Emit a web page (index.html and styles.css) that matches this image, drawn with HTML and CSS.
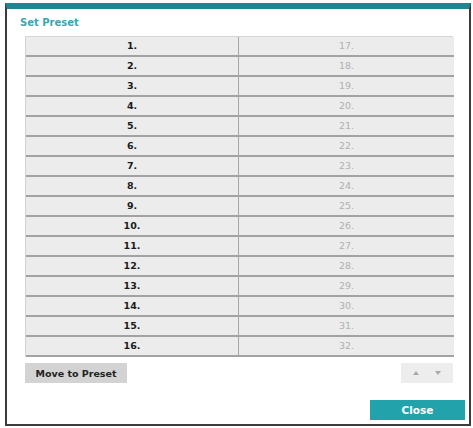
FILE: index.html
```html
<!DOCTYPE html>
<html>
<head>
<meta charset="utf-8">
<link rel="stylesheet" href="styles.css">
</head>
<body>
<div class="dialog">
  <div class="title">Set Preset</div>
  <div class="preset-table">
    <div class="cell num">1.</div><div class="cell dim">17.</div>
    <div class="cell num">2.</div><div class="cell dim">18.</div>
    <div class="cell num">3.</div><div class="cell dim">19.</div>
    <div class="cell num">4.</div><div class="cell dim">20.</div>
    <div class="cell num">5.</div><div class="cell dim">21.</div>
    <div class="cell num">6.</div><div class="cell dim">22.</div>
    <div class="cell num">7.</div><div class="cell dim">23.</div>
    <div class="cell num">8.</div><div class="cell dim">24.</div>
    <div class="cell num">9.</div><div class="cell dim">25.</div>
    <div class="cell num">10.</div><div class="cell dim">26.</div>
    <div class="cell num">11.</div><div class="cell dim">27.</div>
    <div class="cell num">12.</div><div class="cell dim">28.</div>
    <div class="cell num">13.</div><div class="cell dim">29.</div>
    <div class="cell num">14.</div><div class="cell dim">30.</div>
    <div class="cell num">15.</div><div class="cell dim">31.</div>
    <div class="cell num">16.</div><div class="cell dim">32.</div>
  </div>
  <div class="toolbar">
    <button class="btn-move">Move to Preset</button>
    <div class="pager">
      <svg class="arrow" width="6" height="4" viewBox="0 0 6 4"><path d="M0 4 L3 0 L6 4 Z" fill="#a8a8a8"/></svg>
      <svg class="arrow" width="6" height="4" viewBox="0 0 6 4"><path d="M0 0 L6 0 L3 4 Z" fill="#a8a8a8"/></svg>
    </div>
  </div>
  <button class="btn-close">Close</button>
</div>
</body>
</html>
```

FILE: styles.css
```css
html, body {
  margin: 0;
  padding: 0;
  background: #ffffff;
}

body {
  font-family: "DejaVu Sans", Verdana, sans-serif;
}

.dialog {
  box-sizing: border-box;
  width: 466px;
  height: 423px;
  margin: 3px 0 0 5px;
  border: 2px solid #3c3c3c;
  border-top: 6px solid #1f8691;
  background: #ffffff;
  display: flex;
  flex-direction: column;
}

.title {
  margin: 7px 0 0 13px;
  height: 20px;
  font-size: 10px;
  line-height: 13px;
  font-weight: bold;
  color: #3aa6b0;
}

.preset-table {
  margin-left: 18px;
  width: 428px;
  display: grid;
  grid-template-columns: 213px 215px;
  border-top: 1px solid #d4d4d4;
  border-left: 1px solid #d4d4d4;
  border-right: 1px solid #d4d4d4;
  box-sizing: border-box;
}

.cell {
  height: 18px;
  line-height: 18px;
  border-bottom: 2px solid #a2a2a2;
  background: #ececec;
  text-align: center;
  font-size: 9.5px;
}

.num {
  font-weight: bold;
  color: #1a1a1a;
  border-right: 1px solid #a6a6a6;
}

.dim {
  color: #b0b0b0;
}

.toolbar {
  margin: 6px 0 0 18px;
  width: 428px;
  display: flex;
  justify-content: space-between;
}

.btn-move {
  width: 102px;
  height: 20px;
  padding: 0;
  border: none;
  background: #d3d3d3;
  font-family: inherit;
  font-size: 9.5px;
  font-weight: bold;
  color: #222222;
}

.pager {
  width: 52px;
  height: 20px;
  background: #ededed;
  display: flex;
  align-items: center;
  justify-content: space-around;
  padding: 0 4px;
  box-sizing: border-box;
}

.btn-close {
  margin: auto 4px 4px 0;
  align-self: flex-end;
  width: 95px;
  height: 20px;
  padding: 0;
  border: none;
  background: #22a3ac;
  color: #ffffff;
  font-family: inherit;
  font-size: 10.5px;
  font-weight: bold;
}
```
